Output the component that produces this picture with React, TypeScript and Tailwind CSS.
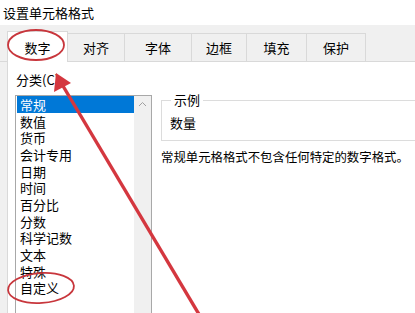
import React from "react";

const tabs = [
  { label: "数字", w: 61, selected: true },
  { label: "对齐", w: 57 },
  { label: "字体", w: 67 },
  { label: "边框", w: 55 },
  { label: "填充", w: 60 },
  { label: "保护", w: 59 },
];

const items = ["常规", "数值", "货币", "会计专用", "日期", "时间", "百分比", "分数", "科学记数", "文本", "特殊", "自定义"];

export default function App() {
  return (
    <div
      className="relative w-[415px] h-[313px] overflow-hidden bg-white text-black"
      style={{ fontFamily: '"Noto Sans CJK SC", "Noto Sans", sans-serif' }}
    >
      <div className="h-[25px] pl-[3px] text-[13px] leading-[25px]">设置单元格格式</div>
      <div className="h-[37px] bg-[#f0f0f0] pl-[7px] flex items-end border-b border-[#d9d9d9]">
        {tabs.map((t, i) =>
          t.selected ? (
            <div
              key={i}
              style={{ width: t.w }}
              className="h-[31px] -mb-px bg-white border-t border-l border-r border-[#d9d9d9] flex items-center justify-center text-[13px] pt-[1px]"
            >
              {t.label}
            </div>
          ) : (
            <div
              key={i}
              style={{ width: t.w }}
              className="h-[28px] bg-[#f0f0f0] border-t border-r border-[#d9d9d9] flex items-center justify-center text-[13px] pt-[1px]"
            >
              {t.label}
            </div>
          )
        )}
      </div>
      <div className="flex h-[260px]">
        <div className="w-[7px] shrink-0 bg-[#f0f0f0]" />
        <div className="flex-1 min-w-0 bg-white border-l border-[#d9d9d9] flex">
          <div className="shrink-0 pl-[7px] pt-[10px] flex flex-col">
            <div className="text-[13px] leading-[16px] pl-[1px]">分类(C)</div>
            <div className="mt-[7px] w-[137px] h-[240px] border border-[#a8a8a8] flex">
              <div className="flex-1 pl-[1px]">
                {items.map((it, i) => (
                  <div
                    key={i}
                    className={
                      "h-[16.7px] flex items-center leading-[13px] text-[13px] pl-[3px] " +
                      (i === 0 ? "bg-[#0078d7] text-white" : "")
                    }
                  >
                    {it}
                  </div>
                ))}
              </div>
              <div className="w-[17px] shrink-0 bg-[#f0f0f0] flex justify-center pt-[5px]">
                <svg width="9" height="6" viewBox="0 0 9 6">
                  <path d="M1 5 L4.5 1.5 L8 5" fill="none" stroke="#a0a0a0" strokeWidth="1" />
                </svg>
              </div>
            </div>
          </div>
          <div className="shrink-0 ml-[9px] mt-[30px] flex flex-col">
            <fieldset className="w-[280px] border border-[#dcdcdc] pl-[8px] pt-[7px] pb-[9px]">
              <legend className="ml-[1px] px-[3px] text-[13px] leading-[16px]">示例</legend>
              <div className="text-[13px] leading-[16px]">数量</div>
            </fieldset>
            <div className="mt-[8px] text-[12.4px] leading-[16px] whitespace-nowrap">
              常规单元格格式不包含任何特定的数字格式。
            </div>
          </div>
        </div>
      </div>
      <svg className="absolute inset-0 pointer-events-none" width="415" height="313" viewBox="0 0 415 313">
        <ellipse cx="36" cy="45" rx="28" ry="15" fill="none" stroke="#c8363c" strokeWidth="1.8" />
        <ellipse cx="41" cy="288" rx="33" ry="15" fill="none" stroke="#c8363c" strokeWidth="1.8" transform="rotate(-4 41 288)" />
        <line x1="200" y1="316" x2="63" y2="86" stroke="#d4373f" strokeWidth="3.4" />
        <polygon points="56,73 54,92 71,83" fill="#d4373f" />
      </svg>
    </div>
  );
}
